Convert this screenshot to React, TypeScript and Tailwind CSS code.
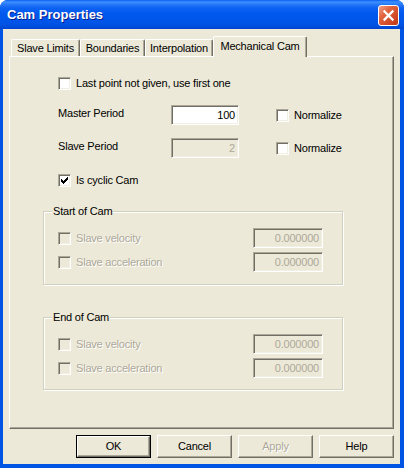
import React from "react";

const FONT = "font-['Liberation_Sans',Arial,sans-serif]";

function CheckMark() {
  return (
    <svg width="7" height="7" viewBox="0 0 7 7" shapeRendering="crispEdges" className="block">
      <path
        fill="#000"
        d="M6 0h1v1h-1z M5 1h2v1h-2z M0 2h1v1h-1z M4 2h3v1h-3z M0 3h2v1h-2z M3 3h3v1h-3z M0 4h5v1h-5z M1 5h3v1h-3z M2 6h1v1h-1z"
      />
    </svg>
  );
}

function Box({ checked = false, disabled = false }: { checked?: boolean; disabled?: boolean }) {
  return (
    <span
      className={
        disabled
          ? "w-[13px] h-[13px] shrink-0 flex items-center justify-center border border-solid border-t-[#ACA899] border-l-[#ACA899] border-b-white border-r-white shadow-[inset_1px_1px_0_#716F64,inset_-1px_-1px_0_#F1EFE2] bg-[#ECE9D8]"
          : "w-[13px] h-[13px] shrink-0 flex items-center justify-center border border-solid border-t-[#ACA899] border-l-[#ACA899] border-b-white border-r-white shadow-[inset_1px_1px_0_#716F64,inset_-1px_-1px_0_#F1EFE2] bg-white"
      }
    >
      {checked ? <CheckMark /> : null}
    </span>
  );
}

function CheckRow({ label, checked = false, disabled = false }: { label: string; checked?: boolean; disabled?: boolean }) {
  return (
    <div className="flex items-center h-[13px]">
      <Box checked={checked} disabled={disabled} />
      <span
        className={
          disabled
            ? "ml-[5px] text-[#ACA899] [text-shadow:1px_1px_0_#fff] leading-[13px] whitespace-nowrap"
            : "ml-[5px] text-black leading-[13px] whitespace-nowrap"
        }
      >
        {label}
      </span>
    </div>
  );
}

function Field({ value, disabled = false, width }: { value: string; disabled?: boolean; width: string }) {
  return (
    <div
      className={
        (disabled
          ? "bg-[#ECE9D8] text-[#ACA899] "
          : "bg-white text-black ") +
        width +
        " h-[20px] shrink-0 flex items-center justify-end pr-[3px] border border-solid border-t-[#ACA899] border-l-[#ACA899] border-b-white border-r-white shadow-[inset_1px_1px_0_#716F64,inset_-1px_-1px_0_#F1EFE2]"
      }
    >
      <span className="leading-[13px]">{value}</span>
    </div>
  );
}

function Group({ title, className }: { title: string; className: string }) {
  return (
    <div
      className={
        "relative w-[300px] border border-solid border-[#D0D0BF] shadow-[1px_1px_0_#fff,inset_1px_1px_0_#fff] " +
        className
      }
    >
      <span className="absolute left-[8px] top-[-8px] px-[1px] bg-[#ECE9D8] leading-[14px] whitespace-nowrap">
        {title}
      </span>
      <div className="pt-[16px] pl-[14px] flex flex-col gap-[4px]">
        <div className="flex items-center h-[20px]">
          <div className="flex-1">
            <CheckRow label="Slave velocity" disabled />
          </div>
          <Field value="0.000000" disabled width="w-[70px]" />
          <div className="w-[19px]" />
        </div>
        <div className="flex items-center h-[20px]">
          <div className="flex-1">
            <CheckRow label="Slave acceleration" disabled />
          </div>
          <Field value="0.000000" disabled width="w-[70px]" />
          <div className="w-[19px]" />
        </div>
      </div>
    </div>
  );
}

function Button({ label, def = false, disabled = false }: { label: string; def?: boolean; disabled?: boolean }) {
  if (def) {
    return (
      <div className="w-[75px] h-[23px] border border-solid border-black">
        <div className="w-full h-full flex items-center justify-center border border-solid border-t-white border-l-white border-b-[#716F64] border-r-[#716F64] shadow-[inset_-1px_-1px_0_#ACA899]">
          <span className="leading-[13px]">{label}</span>
        </div>
      </div>
    );
  }
  return (
    <div className="w-[75px] h-[23px] flex items-center justify-center border border-solid border-t-white border-l-white border-b-[#716F64] border-r-[#716F64] shadow-[inset_-1px_-1px_0_#ACA899]">
      <span
        className={
          disabled ? "leading-[13px] text-[#ACA899] [text-shadow:1px_1px_0_#fff]" : "leading-[13px] text-black"
        }
      >
        {label}
      </span>
    </div>
  );
}

function Tab({ label, width }: { label: string; width: string }) {
  return (
    <div
      className={
        width +
        " h-[17px] flex items-center justify-center rounded-t-[2px] border border-b-0 border-solid border-t-white border-l-white border-r-[#716F64] shadow-[inset_-1px_0_0_#ACA899] whitespace-nowrap"
      }
    >
      <span className="leading-[13px]">{label}</span>
    </div>
  );
}

export default function App() {
  return (
    <div className={"w-[404px] h-[468px] bg-white text-[11px] tracking-[-0.2px] text-black " + FONT}>
      <div className="w-[404px] h-[468px] flex flex-col rounded-t-[8px] overflow-hidden bg-[#0054E3]">
        {/* Title bar */}
        <div className="h-[29px] shrink-0 flex items-center pl-[7px] pr-[5px] bg-[linear-gradient(to_bottom,#0A5EF2_0px,#3D91FF_2px,#2A7CFB_4px,#0C62F2_8px,#0058EE_14px,#0055E8_22px,#004FDF_26px,#0044D0_29px)]">
          <span className="text-white font-bold text-[13px] tracking-[0px] leading-[16px] mt-[1px] [text-shadow:1px_1px_0_#0A1E8C]">
            Cam Properties
          </span>
          <div className="flex-1" />
          <div className="w-[21px] h-[21px] mt-[2px] rounded-[3px] border border-solid border-white flex items-center justify-center bg-[linear-gradient(135deg,#F2A08A_0%,#E2643F_35%,#D04A28_70%,#C13A18_100%)]">
            <svg width="13" height="13" viewBox="0 0 13 13">
              <path d="M2.5 2.5 L10.5 10.5 M10.5 2.5 L2.5 10.5" stroke="#fff" strokeWidth="2.3" strokeLinecap="square" />
            </svg>
          </div>
        </div>

        {/* Client area */}
        <div className="flex-1 ml-[3px] mr-[4px] mb-[4px] bg-[#ECE9D8] flex flex-col px-[6px] pt-[7px] pb-[6px]">
          {/* Tabs */}
          <div className="relative z-10 h-[20px] flex items-end pl-[2px]">
            <Tab label="Slave Limits" width="w-[69px]" />
            <Tab label="Boundaries" width="w-[65px]" />
            <Tab label="Interpolation" width="w-[68px]" />
            <div className="w-[94px] h-[21px] mb-[-1px] bg-[#ECE9D8] flex items-start justify-center pt-[3px] rounded-t-[2px] border border-b-0 border-solid border-t-white border-l-white border-r-[#716F64] shadow-[inset_-1px_0_0_#ACA899] whitespace-nowrap">
              <span className="leading-[13px]">Mechanical Cam</span>
            </div>
          </div>

          {/* Panel */}
          <div className="h-[373px] shrink-0 border border-solid border-t-white border-l-white border-b-[#716F64] border-r-[#716F64] shadow-[inset_-1px_-1px_0_#ACA899] pl-[33px] pt-[20px] flex flex-col">
            <div className="pl-[15px] flex flex-col">
              <CheckRow label="Last point not given, use first one" />

              <div className="mt-[15px] h-[20px] flex items-center">
                <span className="w-[113px] leading-[13px] mt-[-3px]">Master Period</span>
                <Field value="100" width="w-[68px]" />
                <div className="ml-[37px]">
                  <CheckRow label="Normalize" />
                </div>
              </div>

              <div className="mt-[13px] h-[20px] flex items-center">
                <span className="w-[113px] leading-[13px] mt-[-3px]">Slave Period</span>
                <Field value="2" disabled width="w-[68px]" />
                <div className="ml-[37px]">
                  <CheckRow label="Normalize" />
                </div>
              </div>

              <div className="mt-[16px]">
                <CheckRow label="Is cyclic Cam" checked />
              </div>
            </div>

            <Group title="Start of Cam" className="mt-[24px] h-[74px]" />
            <Group title="End of Cam" className="mt-[32px] h-[73px]" />
          </div>

          {/* Buttons */}
          <div className="mt-[6px] flex justify-end gap-[6px] pr-[0px]">
            <Button label="OK" def />
            <Button label="Cancel" />
            <Button label="Apply" disabled />
            <Button label="Help" />
          </div>
        </div>
      </div>
    </div>
  );
}
